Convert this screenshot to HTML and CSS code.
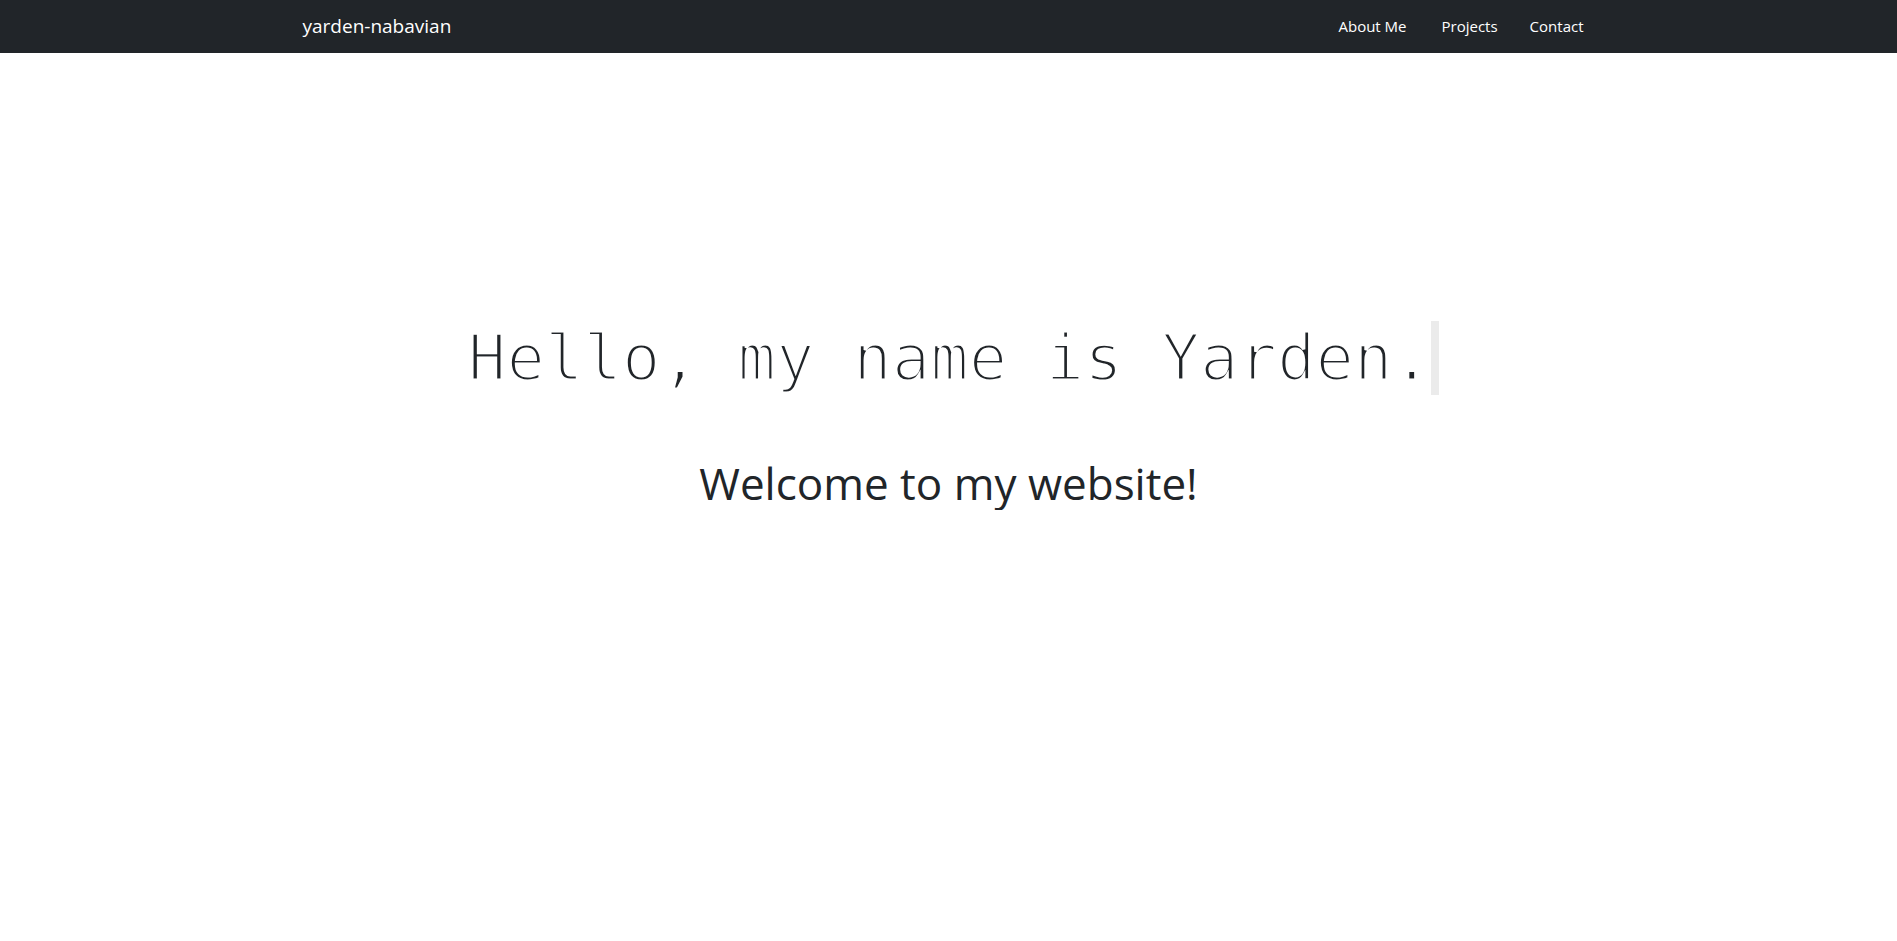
FILE: index.html
```html
<!DOCTYPE html>
<html lang="en">
<head>
<meta charset="utf-8">
<title>yarden-nabavian</title>
<link rel="stylesheet" href="styles.css">
</head>
<body>
<nav class="navbar">
  <div class="container nav-inner">
    <a class="brand" href="#">yarden-nabavian</a>
    <ul class="nav-links">
      <li><a href="#">About Me</a></li>
      <li><a href="#">Projects</a></li>
      <li><a href="#">Contact</a></li>
    </ul>
  </div>
</nav>
<main class="hero">
  <h1 class="typed"><span class="typed-text">Hello, my name is Yarden.</span></h1>
  <h2 class="welcome">Welcome to my website!</h2>
</main>
</body>
</html>
```
FILE: styles.css
```css
* { box-sizing: border-box; }
body {
  margin: 0;
  background: #fff;
  color: #212529;
  font-family: "Open Sans", "Noto Sans", sans-serif;
}
.navbar {
  background: #212529;
  height: 53px;
}
.container {
  max-width: 1320px;
  margin: 0 auto;
  padding: 0 12px;
}
.nav-inner {
  height: 100%;
  display: flex;
  align-items: center;
  justify-content: space-between;
  padding-bottom: 2px;
}
.brand {
  color: #fff;
  text-decoration: none;
  font-size: 19px;
  margin-left: 2px;
}
.nav-links {
  list-style: none;
  display: flex;
  margin: 0;
  padding: 0;
}
.nav-links a {
  display: block;
  color: #fff;
  text-decoration: none;
  font-size: 15px;
  padding: 0 16px;
}
.nav-links li:first-child a { padding-left: 0; margin-right: 3px; }
.nav-links li:last-child a { padding-right: 13px; }
.hero {
  display: flex;
  flex-direction: column;
  align-items: center;
  padding-top: 267px;
}
.typed {
  margin: 0;
  padding-left: 10px;
  font-family: "DejaVu Sans Mono", "Liberation Mono", monospace;
  font-weight: 400;
  font-size: 64px;
  line-height: 77px;
  color: #212529;
  -webkit-text-stroke: 3px #fff;
  paint-order: fill stroke;
  white-space: pre;
}
.typed-text {
  border-right: 8px solid #ebebeb;
}
.welcome {
  margin: 60px 0 0;
  font-weight: 400;
  font-size: 44px;
  line-height: 1.2;
  color: #212529;
}
```
